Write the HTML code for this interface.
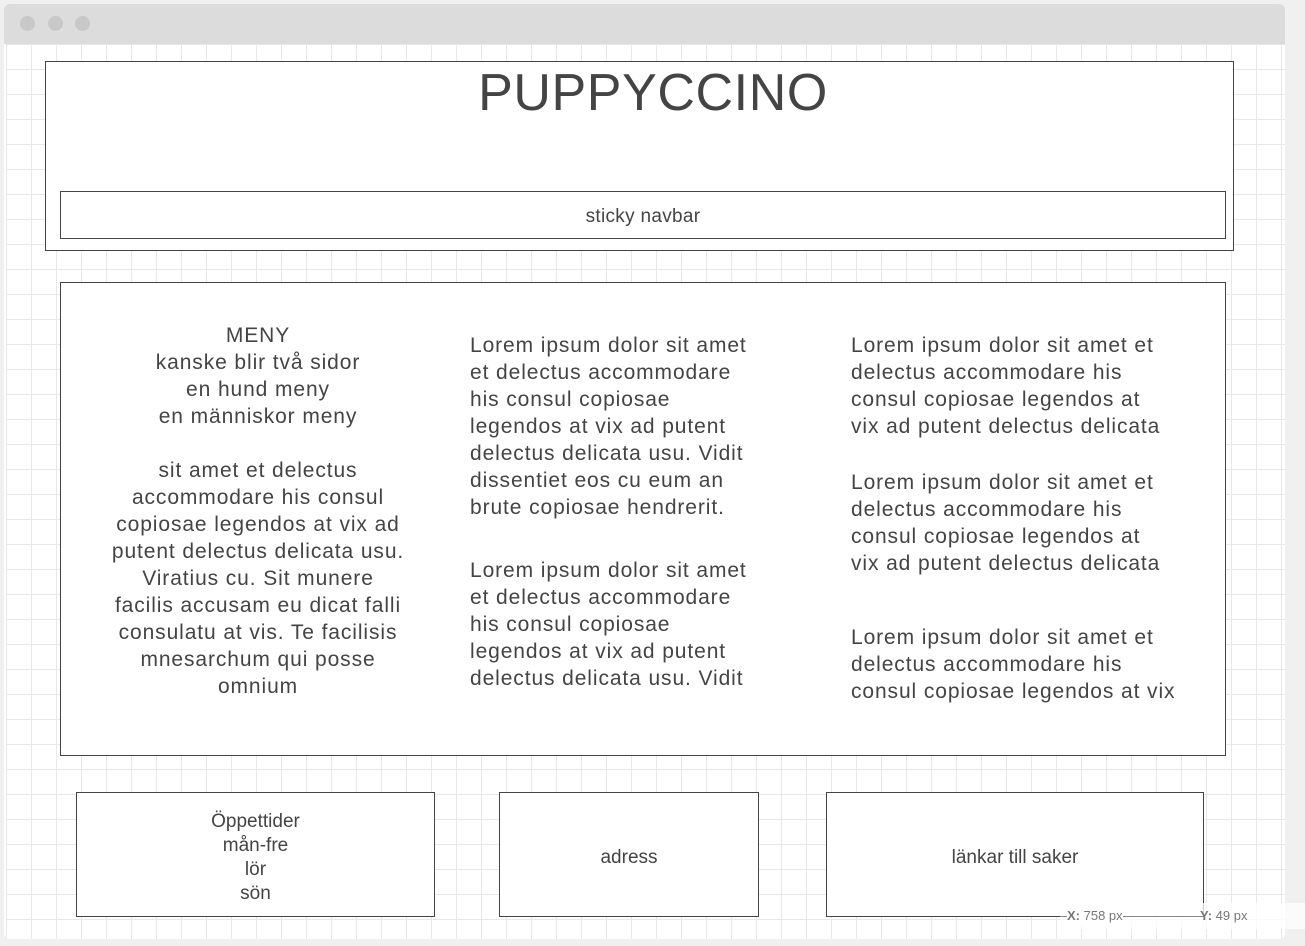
<!DOCTYPE html>
<html><head><meta charset="utf-8"><style>
*{margin:0;padding:0;box-sizing:border-box}
body{width:1305px;height:946px;background:#f0f0f0;position:relative;overflow:hidden;font-family:"Liberation Sans",sans-serif;color:#444}
.win{position:absolute;left:4px;top:4px;width:1281px;height:935px;background:#fff;border-radius:6px;overflow:hidden}
.bar{position:absolute;left:0;top:0;width:100%;height:40px;background:#dcdcdc}
.dot{position:absolute;top:12px;width:15px;height:15px;border-radius:50%;background:#c8c8c8}
.grid{position:absolute;left:2px;top:40px;right:0;bottom:0;background-image:linear-gradient(to right,#e8e8e8 1px,transparent 1px),linear-gradient(to bottom,#e8e8e8 1px,transparent 1px);background-size:25px 25px;background-position:0 0}
.b{position:absolute;border:1px solid #444;background:#fff}
.t{position:absolute;font-size:21px;line-height:27px;letter-spacing:0.9px;white-space:nowrap}
.c{text-align:center}
</style></head><body>
<div class="win"><div class="bar"></div>
<div class="dot" style="left:16px"></div><div class="dot" style="left:44px"></div><div class="dot" style="left:71px"></div>
<div class="grid"></div></div>
<div class="b" style="left:45px;top:61px;width:1189px;height:190px"></div>
<div class="t c" style="left:45px;top:62px;width:1216px;font-size:52px;line-height:62px;letter-spacing:0.6px">PUPPYCCINO</div>
<div class="b" style="left:60px;top:191px;width:1166px;height:48px;font-size:19px;text-align:center;line-height:50px;letter-spacing:0.3px">sticky navbar</div>
<div class="b" style="left:60px;top:282px;width:1166px;height:474px"></div>
<div class="t c" style="left:98px;top:322px;width:320px">MENY<br>kanske blir två sidor<br>en hund meny<br>en människor meny<br><br>sit amet et delectus<br>accommodare his consul<br>copiosae legendos at vix ad<br>putent delectus delicata usu.<br>Viratius cu. Sit munere<br>facilis accusam eu dicat falli<br>consulatu at vis. Te facilisis<br>mnesarchum qui posse<br>omnium</div>
<div class="t" style="left:470px;top:332px">Lorem ipsum dolor sit amet<br>et delectus accommodare<br>his consul copiosae<br>legendos at vix ad putent<br>delectus delicata usu. Vidit<br>dissentiet eos cu eum an<br>brute copiosae hendrerit.</div>
<div class="t" style="left:470px;top:557px">Lorem ipsum dolor sit amet<br>et delectus accommodare<br>his consul copiosae<br>legendos at vix ad putent<br>delectus delicata usu. Vidit</div>
<div class="t" style="left:851px;top:332px">Lorem ipsum dolor sit amet et<br>delectus accommodare his<br>consul copiosae legendos at<br>vix ad putent delectus delicata</div>
<div class="t" style="left:851px;top:469px">Lorem ipsum dolor sit amet et<br>delectus accommodare his<br>consul copiosae legendos at<br>vix ad putent delectus delicata</div>
<div class="t" style="left:851px;top:624px">Lorem ipsum dolor sit amet et<br>delectus accommodare his<br>consul copiosae legendos at vix</div>
<div class="b" style="left:76px;top:792px;width:359px;height:125px;display:flex;align-items:center;justify-content:center;text-align:center;font-size:19px;line-height:24px;padding-top:6px">Öppettider<br>mån-fre<br>lör<br>sön</div>
<div class="b" style="left:499px;top:792px;width:260px;height:125px;display:flex;align-items:center;justify-content:center;font-size:19px;padding-top:6px">adress</div>
<div class="b" style="left:826px;top:792px;width:378px;height:125px;display:flex;align-items:center;justify-content:center;font-size:19px;padding-top:6px">länkar till saker</div>
<div style="position:absolute;left:1060px;top:903px;width:245px;height:26px;background:rgba(255,255,255,.75)"></div>
<div style="position:absolute;left:1060px;top:916px;width:145px;height:1px;background:#888"></div>
<div style="position:absolute;left:1067px;top:908px;font-size:13px;color:#777;background:#fff"><b>X:</b> 758 px</div>
<div style="position:absolute;left:1200px;top:908px;font-size:13px;color:#777"><b>Y:</b> 49 px</div>
</body></html>
